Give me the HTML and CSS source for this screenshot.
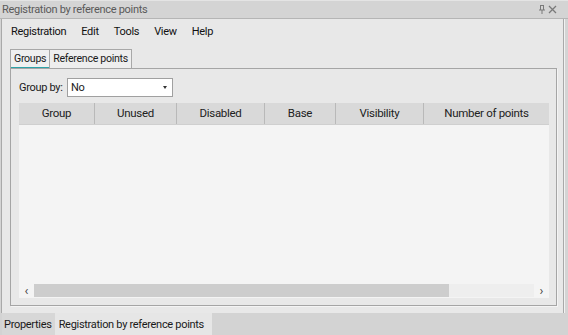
FILE: index.html
```html
<!DOCTYPE html>
<html>
<head>
<meta charset="utf-8">
<link rel="stylesheet" href="styles.css">
</head>
<body>
<div class="window">
  <div class="titlebar">
    <span class="title">Registration by reference points</span>
    <span class="title-icons">
      <svg width="8" height="9" viewBox="0 0 8 9"><path d="M2 0.5h4M2.5 0.5v4.5M5.5 0.5v4.5M1 5h6M4 5v4" stroke="#7a7a7a" stroke-width="1" fill="none"/></svg>
      <svg width="9" height="9" viewBox="0 0 9 9"><path d="M1 1L8 8M8 1L1 8" stroke="#7a7a7a" stroke-width="1.3"/></svg>
    </span>
  </div>
  <div class="panel">
    <div class="menubar">
      <span class="menu-item">Registration</span>
      <span class="menu-item">Edit</span>
      <span class="menu-item">Tools</span>
      <span class="menu-item">View</span>
      <span class="menu-item">Help</span>
    </div>
    <div class="tabstrip">
      <div class="tab active">Groups</div>
      <div class="tab">Reference points</div>
    </div>
    <div class="tabpane">
      <div class="groupby">
        <span class="label">Group by:</span>
        <div class="combo"><span>No</span><span class="caret"></span></div>
      </div>
      <div class="grid">
        <div class="header">
          <div class="col c1">Group</div>
          <div class="col c2">Unused</div>
          <div class="col c3">Disabled</div>
          <div class="col c4">Base</div>
          <div class="col c5">Visibility</div>
          <div class="col c6">Number of points</div>
        </div>
        <div class="gbody"></div>
        <div class="hscroll">
          <span class="arrow">&lsaquo;</span>
          <div class="track"><div class="thumb"></div></div>
          <span class="arrow">&rsaquo;</span>
        </div>
      </div>
    </div>
  </div>
  <div class="bottomtabs">
    <div class="btab">Properties</div>
    <div class="btab active">Registration by reference points</div>
  </div>
</div>
</body>
</html>
```
FILE: styles.css
```css
html, body {
  margin: 0;
  padding: 0;
}
body {
  width: 568px;
  height: 335px;
  overflow: hidden;
  background: #d4d4d4;
  font-family: "Roboto", "Lato", sans-serif;
  font-size: 11px;
  letter-spacing: -0.3px;
  color: #1a1a1a;
}
.window {
  display: flex;
  flex-direction: column;
  height: 335px;
}
.titlebar {
  height: 19px;
  box-sizing: border-box;
  border-top: 1px solid #e4e4e4;
  border-bottom: 1px solid #b5b5b5;
  background: #d4d4d4;
  display: flex;
  align-items: center;
  justify-content: space-between;
  padding: 0 11px 0 2px;
}
.title {
  color: #5a5a5a;
  font-size: 11px;
  line-height: 17px;
}
.title-icons {
  display: flex;
  gap: 2px;
  align-items: center;
}
.title-icons svg { display: block; }
.panel {
  height: 294px;
  margin: 0 4px 0 1px;
  border-left: 1px solid #a9a9a9;
  border-right: 1px solid #a9a9a9;
  box-shadow: 1px 0 0 #f2f2f2;
  background: #e8e8e8;
  display: flex;
  flex-direction: column;
  padding: 0 6px 7px 8px;
  box-sizing: border-box;
}
.menubar {
  display: flex;
  height: 22px;
  align-items: center;
  padding-left: 1px;
  margin-top: 1px;
}
.menu-item {
  font-size: 11px;
  margin-right: 15px;
  color: #111;
}
.tabstrip {
  display: flex;
  margin-top: 7px;
  height: 19px;
}
.tab {
  box-sizing: border-box;
  height: 19px;
  padding: 0 3px;
  border: 1px solid #a8a8a8;
  border-bottom: none;
  background: #eeeeee;
  line-height: 18px;
  font-size: 10.6px;
}
.tab + .tab { border-left: none; }
.tab.active {
  background: #f0f0f0;
  box-shadow: inset 0 -1px 0 #2ea3a8;
}
.tabpane {
  flex: 1;
  border: 1px solid #a5a5a5;
  box-shadow: 1px 1px 0 #f4f4f4;
  background: #e8e8e8;
  padding: 9px 7px 5px 8px;
  display: flex;
  flex-direction: column;
}
.groupby {
  display: flex;
  align-items: center;
  height: 19px;
}
.label {
  width: 48px;
  white-space: nowrap;
  font-size: 11px;
}
.combo {
  box-sizing: border-box;
  width: 106px;
  height: 19px;
  background: #fff;
  border: 1px solid #a0a0a0;
  display: flex;
  align-items: center;
  justify-content: space-between;
  padding: 0 5px 0 3px;
  font-size: 11px;
}
.caret {
  width: 0;
  height: 0;
  border-left: 2.5px solid transparent;
  border-right: 2.5px solid transparent;
  border-top: 3px solid #333;
}
.grid {
  margin-top: 6px;
  flex: 1;
  display: flex;
  flex-direction: column;
  background: #f4f4f4;
  border-bottom: 2px solid #e8e8e8;
}
.header {
  display: flex;
  height: 21px;
  background: #d9d9d9;
  border-bottom: 1px solid #cfcfcf;
}
.col {
  box-sizing: border-box;
  text-align: center;
  line-height: 21px;
  border-right: 1px solid #b9b9b9;
  font-size: 11.5px;
  color: #222;
}
.c1 { width: 76px; }
.c2 { width: 82px; }
.c3 { width: 88px; }
.c4 { width: 71px; }
.c5 { width: 88px; }
.c6 { flex: 1; border-right: none; }
.gbody { flex: 1; }
.hscroll {
  display: flex;
  height: 13px;
  align-items: center;
  margin-bottom: 1px;
}
.arrow {
  width: 15px;
  text-align: center;
  font-size: 13px;
  line-height: 13px;
  color: #444;
  letter-spacing: 0;
}
.track {
  flex: 1;
  height: 13px;
  background: #eeeeee;
}
.thumb {
  width: 415px;
  height: 13px;
  background: #cdcdcd;
}
.bottomtabs {
  flex: 1;
  display: flex;
  align-items: stretch;
  background: #d3d3d3;
  padding-left: 2px;
}
.btab {
  display: flex;
  align-items: center;
  padding: 0 3px 0 2px;
  font-size: 11px;
  background: #d7d7d7;
}
.btab.active {
  background: #e6e6e6;
  padding: 0 8px 0 4px;
}
```
